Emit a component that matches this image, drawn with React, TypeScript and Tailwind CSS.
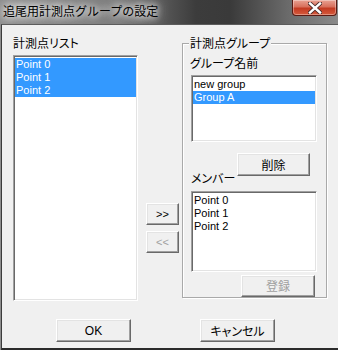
// Group settings dialog (Win7 classic style)
const jp = "font-['Noto_Sans_CJK_JP',sans-serif] [font-feature-settings:'palt']";
const latin = "font-['Liberation_Sans','Noto_Sans_CJK_JP',sans-serif]";

const sunken =
  'bg-white border border-t-[#a0a0a0] border-l-[#a0a0a0] border-r-white border-b-white shadow-[inset_1px_1px_0_#696969,inset_-1px_-1px_0_#e3e3e3]';
const raised =
  'bg-[#f0f0f0] border border-t-white border-l-white border-r-[#696969] border-b-[#696969] shadow-[inset_-1px_-1px_0_#a0a0a0,inset_1px_1px_0_#e3e3e3] flex items-center justify-center';

function ListBox({ items, selected, className }: { items: string[]; selected: number[]; className: string }) {
  return (
    <div className={`${sunken} ${className} p-[1px] overflow-hidden`}>
      <div className="pt-[1px]">
        {items.map((item, i) => (
          <div
            key={item}
            className={`h-[13px] leading-[13px] pl-[1px] text-[11px] ${latin} ${
              selected.includes(i) ? 'bg-[#3399ff] text-white' : 'text-black'
            }`}
          >
            {item}
          </div>
        ))}
      </div>
    </div>
  );
}

function Button({ label, disabled, className, font }: { label: string; disabled?: boolean; className: string; font: string }) {
  return (
    <div className={`${raised} ${className} ${font} ${disabled ? 'text-[#a0a0a0]' : 'text-black'}`}>{label}</div>
  );
}

export default function App() {
  return (
    <div className="w-[338px] h-[350px] flex flex-col overflow-hidden bg-[linear-gradient(to_right,#8e8e8e_0%,#7c7c7c_35%,#3c3c3c_58%,#3a3a3a_68%,#6a6a6a_85%,#8a8a8a_100%)]">
      {/* Title bar */}
      <div className="h-[24px] flex items-start shrink-0">
        <span className="mt-[3px] ml-[3px] text-[12px] leading-[16px] text-black font-['Noto_Sans_CJK_JP',sans-serif] [text-shadow:0_0_6px_#fff,0_0_10px_#fff,0_0_14px_#ddd]">
          追尾用計測点グループの設定
        </span>
        <div className="ml-auto mr-[1px] w-[45px] h-[16px] rounded-b-[4px] border border-t-0 border-[#5a1a12] bg-[linear-gradient(to_bottom,#e9a293_0%,#d8705c_45%,#c33a22_55%,#d55a3c_100%)] shadow-[inset_0_0_0_1px_rgba(255,255,255,0.35)] flex items-center justify-center">
          <svg width="14" height="12" viewBox="0 0 14 12">
            <path d="M2 1.5 L12 10.5 M12 1.5 L2 10.5" stroke="#4a2a28" strokeWidth="4.2" strokeLinecap="square" />
            <path d="M2 1.5 L12 10.5 M12 1.5 L2 10.5" stroke="#ffffff" strokeWidth="2.4" strokeLinecap="square" />
          </svg>
        </div>
      </div>

      {/* Client area */}
      <div className="flex-1 ml-[1px] bg-[#f0f0f0] border-l border-t border-b-2 border-l-[#3c3c3c] border-t-[#5c5c5c] border-b-[#2b2b2b] flex flex-col">
        <div className="flex pt-[11px] pl-[11px]">
          {/* Left: point list */}
          <div className="w-[125px] flex flex-col">
            <span className={`text-[12px] leading-[14px] ${jp}`}>計測点リスト</span>
            <ListBox items={['Point 0', 'Point 1', 'Point 2']} selected={[0, 1, 2]} className="mt-[5px] h-[246px]" />
          </div>

          {/* Middle: move buttons */}
          <div className="ml-[8px] w-[33px] flex flex-col">
            <Button label=">>" className="mt-[167px] h-[22px] text-[11px] text-[#1a2a8a]" font={latin} />
            <Button label="<<" disabled className="mt-[6px] h-[22px] text-[11px]" font={latin} />
          </div>

          {/* Right: group box */}
          <div className="ml-[3px] mt-[7px] w-[145px] self-start border border-[#a9a9a9] shadow-[inset_1px_1px_0_#fff,1px_1px_0_#fff] flex flex-col pl-[7px]">
            <span className={`-mt-[8px] -ml-[1px] px-[1px] w-fit bg-[#f0f0f0] text-[12px] leading-[14px] ${jp}`}>計測点グループ</span>
            <span className={`mt-[6px] text-[12px] leading-[14px] ${jp}`}>グループ名前</span>
            <ListBox items={['new group', 'Group A']} selected={[1]} className="ml-[1px] mt-[5px] w-[126px] h-[67px]" />
            <Button label="削除" className="ml-[47px] mt-[11px] w-[73px] h-[23px] text-[12px]" font={jp} />
            <span className={`-mt-[5px] ml-[1px] w-fit text-[12px] leading-[14px] ${jp}`}>メンバー</span>
            <ListBox items={['Point 0', 'Point 1', 'Point 2']} selected={[]} className="ml-[1px] mt-[6px] w-[126px] h-[81px]" />
            <Button label="登録" disabled className="ml-[51px] mt-[3px] w-[74px] h-[22px] text-[12px]" font={jp} />
          </div>
        </div>

        {/* Bottom buttons */}
        <div className="flex pl-[54px] mt-[18px] gap-[69px]">
          <Button label="OK" className="w-[75px] h-[23px] text-[12px]" font={latin} />
          <Button label="キャンセル" className="w-[75px] h-[23px] text-[12px]" font={jp} />
        </div>
      </div>
    </div>
  );
}
